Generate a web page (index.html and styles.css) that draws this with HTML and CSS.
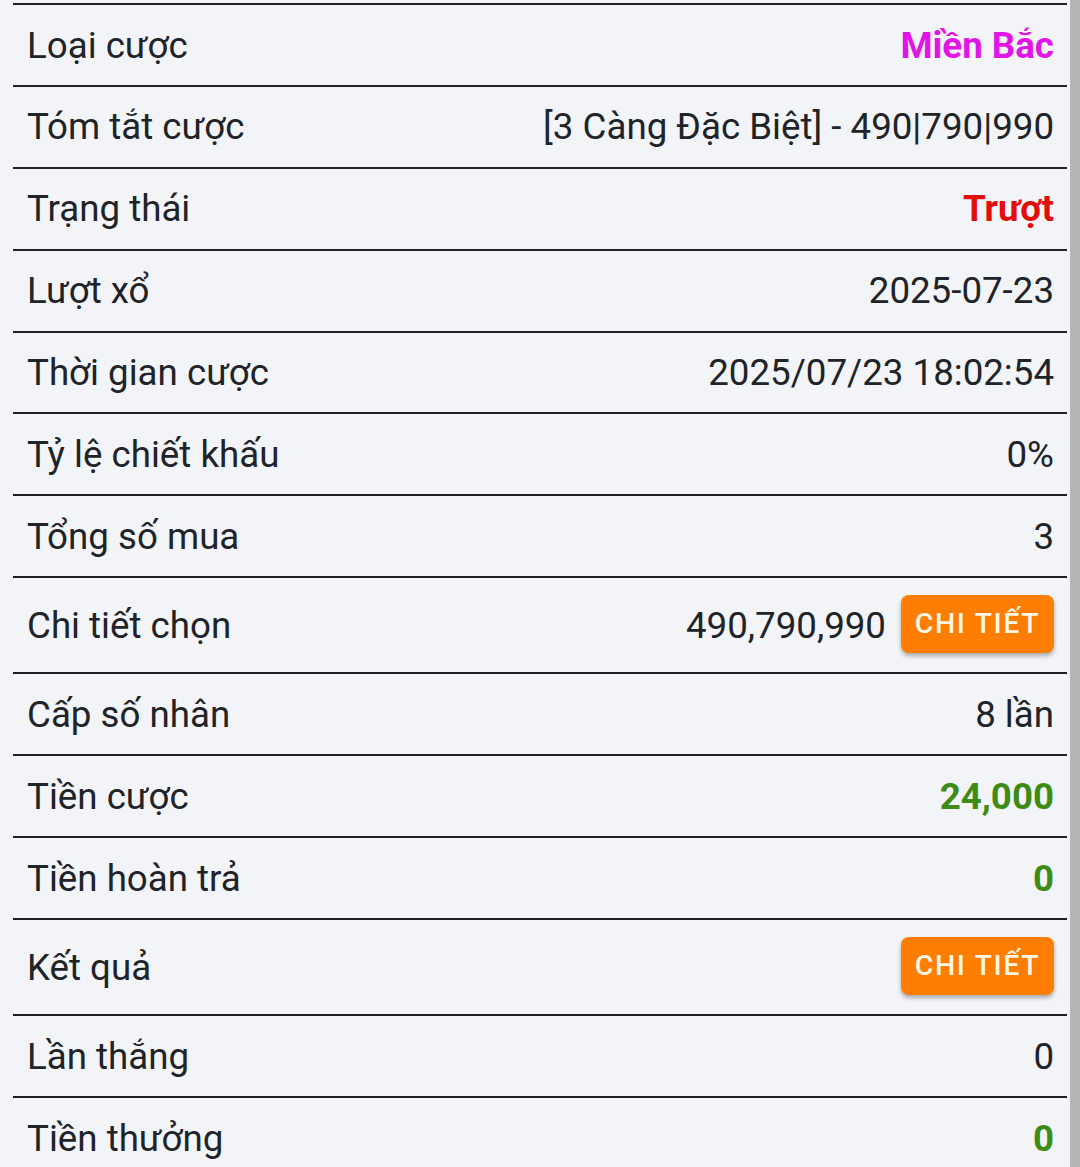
FILE: index.html
```html
<!DOCTYPE html>
<html lang="vi">
<head>
<meta charset="utf-8">
<title>Chi tiết cược</title>
<link rel="stylesheet" href="styles.css">
</head>
<body>
<div class="page">
  <div class="list">
    <div class="row"><span class="label">Loại cược</span><span class="value bold magenta">Miền Bắc</span></div>
    <div class="row"><span class="label">Tóm tắt cược</span><span class="value">[3 Càng Đặc Biệt] - 490|790|990</span></div>
    <div class="row"><span class="label">Trạng thái</span><span class="value bold red">Trượt</span></div>
    <div class="row"><span class="label">Lượt xổ</span><span class="value">2025-07-23</span></div>
    <div class="row"><span class="label">Thời gian cược</span><span class="value">2025/07/23 18:02:54</span></div>
    <div class="row"><span class="label">Tỷ lệ chiết khấu</span><span class="value">0%</span></div>
    <div class="row"><span class="label">Tổng số mua</span><span class="value">3</span></div>
    <div class="row tall"><span class="label">Chi tiết chọn</span><span class="value-group"><span class="value">490,790,990</span><button class="btn">CHI TIẾT</button></span></div>
    <div class="row"><span class="label">Cấp số nhân</span><span class="value">8 lần</span></div>
    <div class="row"><span class="label">Tiền cược</span><span class="value bold green">24,000</span></div>
    <div class="row"><span class="label">Tiền hoàn trả</span><span class="value bold green">0</span></div>
    <div class="row tall"><span class="label">Kết quả</span><span class="value-group"><button class="btn">CHI TIẾT</button></span></div>
    <div class="row"><span class="label">Lần thắng</span><span class="value">0</span></div>
    <div class="row"><span class="label">Tiền thưởng</span><span class="value bold green">0</span></div>
  </div>
  <div class="scrollbar"></div>
</div>
</body>
</html>
```
FILE: styles.css
```css
html, body {
  margin: 0;
  padding: 0;
  background: #f3f4f8;
  height: 100%;
  overflow: hidden;
}
body {
  font-family: Roboto, "Noto Sans", sans-serif;
  color: #202328;
}
.page {
  display: flex;
  height: 1167px;
}
.list {
  flex: 1;
  margin: 3px 3px 0 13px;
  display: flex;
  flex-direction: column;
}
.row {
  box-sizing: border-box;
  height: 81.9px;
  flex: none;
  border-top: 2px solid #1f2126;
  display: flex;
  align-items: center;
  justify-content: space-between;
  padding: 2px 13px 0 14px;
  font-size: 36.7px;
  line-height: 1;
}
.row.tall {
  height: 96.2px;
}
.label {
  white-space: nowrap;
}
.value {
  white-space: nowrap;
}
.value-group {
  display: flex;
  align-items: center;
  gap: 15px;
}
.bold { font-weight: 700; }
.magenta { color: #e015e6; }
.red { color: #e20d0d; }
.green { color: #3e8c16; }
.btn {
  font-family: Roboto, "Noto Sans", sans-serif;
  font-size: 28.5px;
  font-weight: 500;
  letter-spacing: 1.6px;
  color: #fff6e6;
  background: #ff7d00;
  border: none;
  border-radius: 8px;
  width: 153px;
  height: 58px;
  padding: 0 0 2px 0;
  margin-top: -4px;
  box-shadow: 0 3px 4px rgba(0, 0, 0, 0.3);
}
.scrollbar {
  width: 10px;
  flex: none;
  background: #b6b6b9;
}
```
